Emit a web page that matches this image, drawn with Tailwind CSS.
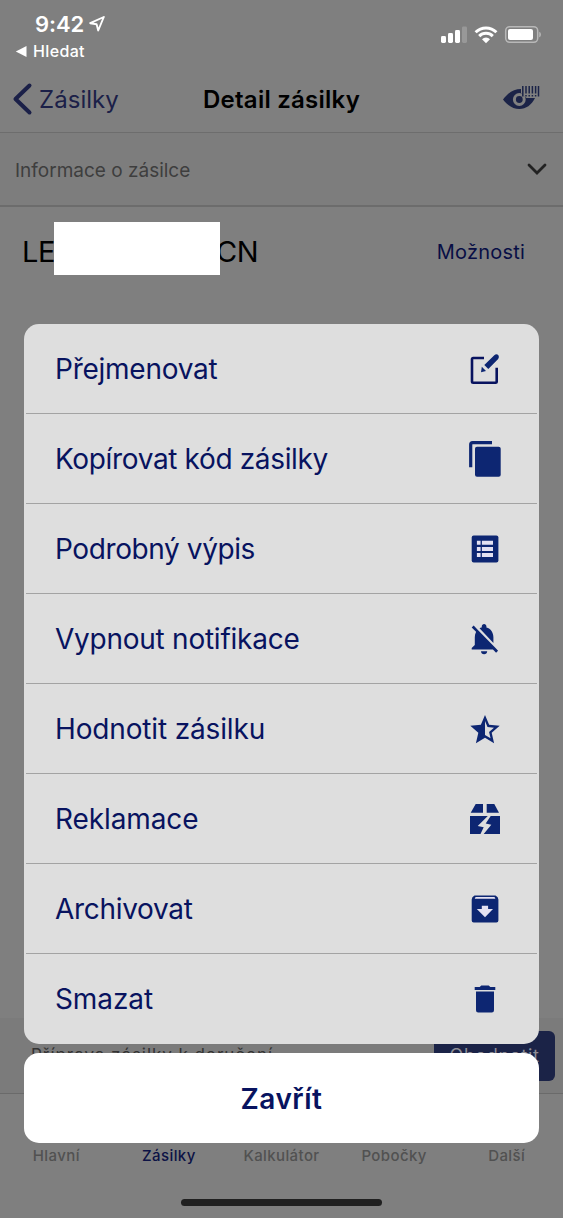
<!DOCTYPE html>
<html lang="cs">

<head>
  <meta charset="UTF-8" />
  <title>Detail zásilky</title>
  <meta name="viewport" content="width=device-width, initial-scale=1.0" />
  <script src="https://cdn.jsdelivr.net/npm/@tailwindcss/browser@4"></script>
</head>

<body class="font-['Inter',sans-serif] bg-[#7f7f7f] overflow-hidden">
  <div class="relative w-[563px] h-[1218px] flex flex-col overflow-hidden">

    <!-- Status bar -->
    <div class="h-[66px] shrink-0 flex justify-between text-white">
      <div class="pt-[10px] pl-[15px]">
        <div class="flex items-center h-[28px] pl-[20px]">
          <span class="text-[22px] leading-[28px] font-semibold tracking-[-0.1px]">9:42</span>
          <svg class="ml-[5px] w-[16px] h-[16px]" viewBox="0 0 16 16" fill="none" stroke="currentColor" stroke-width="1.9" stroke-linejoin="round"><path d="M14.8 1 1.2 7.200 7.600 8.200 9.200 14.500z" /></svg>
        </div>
        <div class="flex items-center h-[26px]">
          <svg class="w-[12px] h-[11px]" viewBox="0 0 12 11" fill="currentColor"><path d="M.8 5.500 11.500 0v11z" /></svg>
          <span class="ml-[6px] text-[16px] leading-[26px] font-medium tracking-[0.35px]">Hledat</span>
        </div>
      </div>
      <div class="flex items-start pt-[25px] pr-[21px]">
        <svg class="w-[26px] h-[19px]" viewBox="0 0 26 19" fill="currentColor">
          <rect x="0" y="11" width="5" height="7" rx="1.4" />
          <rect x="7" y="8" width="5" height="10" rx="1.4" />
          <rect x="14" y="5" width="5" height="13" rx="1.4" />
          <rect x="21" y="1.500" width="5" height="16.500" rx="1.4" opacity=".2" />
        </svg>
        <svg class="ml-[7px] w-[24px] h-[19px]" viewBox="0 0 24 19" fill="none" stroke="currentColor" stroke-width="3">
          <path d="M1.600 7.200a14.800 14.800 0 0 1 20.800 0" />
          <path d="M5.200 11.100a9.700 9.700 0 0 1 13.600 0" />
          <path d="M8 14.200a5.700 5.700 0 0 1 8 0L12 18.200z" fill="currentColor" stroke="none" />
        </svg>
        <svg class="ml-[6px] w-[38px] h-[19px]" viewBox="0 0 38 19">
          <rect x="1.700" y="1.700" width="32" height="15.600" rx="4" fill="none" stroke="#fff" stroke-opacity=".45" stroke-width="1.500" />
          <rect x="4" y="4" width="25" height="11" rx="2" fill="#fff" />
          <path d="M35.300 6.700c2 .8 2 4.800 0 5.600z" fill="#fff" fill-opacity=".5" />
        </svg>
      </div>
    </div>

    <!-- Navigation -->
    <div class="h-[67px] shrink-0 border-b border-[#6d6d6d] grid grid-cols-[1fr_auto_1fr] items-center">
      <div class="flex items-center pl-[12px] text-[#1b2048]">
        <svg class="w-[21px] h-[34px]" viewBox="0 0 21 34" fill="none" stroke="currentColor" stroke-width="4" stroke-linecap="round" stroke-linejoin="round"><path d="M17.500 3.500 3.500 17l14 13.500" /></svg>
        <span class="ml-[6px] pt-[2px] text-[24px] leading-[30px] tracking-[0.05px]">Zásilky</span>
      </div>
      <h1 class="pt-[2px] text-[24px] leading-[30px] font-semibold text-black tracking-[0.25px]">Detail zásilky</h1>
      <div class="flex justify-end pr-[23px]">
        <svg class="w-[38px] h-[28px]" viewBox="0 0 38 28">
          <path d="M1 14.500C7 7 12 4 19 4v4h14v5c-3.500 7-9 11-15.500 11S5.500 20.500 1 14.500z" fill="#1b2347" />
          <path d="M19.500 0H38v13H24.500l-5-4z" fill="#808080" />
          <circle cx="17.300" cy="14.500" r="4.900" fill="#1b2347" stroke="#808080" stroke-width="3" />
          <path d="M20.800 1v10.500M24 1v7.500M27.200 1v7.500M30.400 1v7.500M33.600 1v7.500M36.500 1v10.500M24 10v1.500M27.200 10v1.500M30.400 10v1.500M33.600 10v1.500" stroke="#1b2347" stroke-width="1.500" />
        </svg>
      </div>
    </div>

    <!-- Section header -->
    <div class="h-[74px] shrink-0 border-b-2 border-[#6c6c6c] bg-[#7d7d7d] flex items-center justify-between pl-[15px] pr-[16px]">
      <span class="pt-[3px] text-[19px] leading-[26px] text-[#3e3e3e]">Informace o zásilce</span>
      <svg class="w-[20px] h-[14px]" viewBox="0 0 20 14" fill="none" stroke="#222" stroke-width="2.800" stroke-linecap="round"><path d="m2 3 8 8 8-8" /></svg>
    </div>

    <!-- Shipment number -->
    <div class="h-[811px] shrink-0 flex items-start justify-between pt-[15px] pl-[22px] pr-[38px]">
      <div class="flex items-center h-[53px] text-[29px] text-black">
        <span class="w-[32px] pt-[6px] whitespace-nowrap tracking-[-0.5px]">LE</span>
        <span class="relative w-[166px] h-[53px] bg-white"></span>
        <span class="ml-[-4px] pt-[6px] tracking-[-0.5px]">CN</span>
      </div>
      <span class="h-[60px] leading-[61px] text-[20px] text-[#080e45] tracking-[0.2px]">Možnosti</span>
    </div>

    <!-- Customs row -->
    <div class="h-[76px] shrink-0 bg-[#7b7b7b] border-b border-[#6a6a6a] flex items-start justify-between pt-[13px] pl-[31px] pr-[8px]">
      <span class="mt-[12px] text-[17px] leading-[24px] text-[#333] tracking-[0.95px]">Příprava zásilky k doručení</span>
      <span class="w-[121px] h-[50px] rounded-[6px] bg-[#1b2347] text-center text-[18px] leading-[50px] text-[#8e8e96] tracking-[0.7px]">Ohodnotit</span>
    </div>

    <!-- Tab bar -->
    <div class="grow grid grid-cols-5 pt-[52px] text-center text-[15px] leading-[20px] font-medium text-[#515151] tracking-[0.4px]">
      <span>Hlavní</span>
      <span class="text-[#0c1245]">Zásilky</span>
      <span>Kalkulátor</span>
      <span>Pobočky</span>
      <span>Další</span>
    </div>
    <div class="absolute left-[181px] bottom-[12px] w-[201px] h-[7px] rounded-full bg-[#202020]"></div>

    <!-- Action sheet -->
    <div class="absolute left-[24px] top-[324px] w-[515px] flex flex-col gap-[9px]">
      <ul class="rounded-[15px] bg-[#dedede] overflow-hidden text-[28px] text-[#08135f] fill-[#0d2672]">
        <li class="h-[90px] flex items-center justify-between mx-[2px] pt-px pl-[29px] pr-[34px] border-b border-[#a3a3a3]">
          <span class="tracking-[-0.25px]">Přejmenovat</span>
          <svg class="w-[36px] h-[36px]" viewBox="0 0 36 36">
            <path d="M17 7H6.200Q5 7 5 8.200v22.300q0 1.200 1.200 1.200h22.300q1.200 0 1.200-1.200V16.700" fill="none" stroke="#08135f" stroke-width="2.600" />
            <path d="m14 21.200.8-5.400 4.200 4.200zM17.300 14 27.300 4.200q2-1.600 4-.2 1.300 2-.1 4L21.300 18z" />
          </svg>
        </li>
        <li class="h-[90px] flex items-center justify-between mx-[2px] pt-px pl-[29px] pr-[34px] border-b border-[#a3a3a3]">
          <span class="tracking-[-0.35px]">Kopírovat kód zásilky</span>
          <svg class="w-[36px] h-[36px]" viewBox="0 0 36 36">
            <path d="M3.700 26.300V3.600q0-2 2-2H25" fill="none" stroke="#0d2672" stroke-width="3.200" />
            <rect x="8" y="5.700" width="25.700" height="30" rx="2" />
          </svg>
        </li>
        <li class="h-[90px] flex items-center justify-between mx-[2px] pt-px pl-[29px] pr-[34px] border-b border-[#a3a3a3]">
          <span class="tracking-[-0.4px]">Podrobný výpis</span>
          <svg class="w-[36px] h-[36px]" viewBox="0 0 36 36">
            <rect x="4.700" y="4.500" width="26.700" height="27" rx="2" />
            <path d="M9.900 9.800h3.700v4H9.900zM14.900 9.800H26v4H14.900zM9.900 16h3.700v4H9.900zM14.900 16H26v4H14.900zM9.900 22.100h3.700v4H9.900zM14.900 22.100H26v4H14.900z" fill="#e4e1f2" />
          </svg>
        </li>
        <li class="h-[90px] flex items-center justify-between mx-[2px] pt-px pl-[29px] pr-[34px] border-b border-[#a3a3a3]">
          <span class="tracking-[-0.25px]">Vypnout notifikace</span>
          <svg class="w-[36px] h-[36px]" viewBox="0 0 36 36">
            <path transform="translate(-1.500 -.85) scale(1.550)" d="M20 18.690L7.840 6.140 5.270 3.490 4 4.760l2.800 2.800v.01c-.52.99-.8 2.160-.8 3.420v5l-2 2v1h13.730l2 2L21 19.720l-1-1.030zM12 22c1.110 0 2-.89 2-2h-4c0 1.110.89 2 2 2zm6-7.320V11c0-3.080-1.640-5.640-4.500-6.320V4c0-.83-.67-1.500-1.500-1.500s-1.500.67-1.500 1.500v.68c-.15.03-.29.08-.42.12-.1.03-.2.070-.3.110h-.01c-.01 0-.01 0-.02.01-.23.09-.46.2-.68.310 0 0-.01 0-.01.01L18 14.680z" />
          </svg>
        </li>
        <li class="h-[90px] flex items-center justify-between mx-[2px] pt-px pl-[29px] pr-[34px] border-b border-[#a3a3a3]">
          <span class="tracking-[-0.15px]">Hodnotit zásilku</span>
          <svg class="w-[36px] h-[36px]" viewBox="0 0 36 36">
            <path transform="translate(.36 1) scale(1.470 1.490)" d="M22 9.240l-7.190-.62L12 2 9.190 8.630 2 9.240l5.460 4.730L5.820 21 12 17.270 18.180 21l-1.630-7.030L22 9.240zM12 15.400V6.100l1.710 4.040 4.380.38-3.320 2.880 1 4.280L12 15.400z" />
          </svg>
        </li>
        <li class="h-[90px] flex items-center justify-between mx-[2px] pt-px pl-[29px] pr-[34px] border-b border-[#a3a3a3]">
          <span class="tracking-[-0.1px]">Reklamace</span>
          <svg class="w-[36px] h-[36px]" viewBox="0 0 36 36">
            <path d="M8.700 3H16v8.700H3.700zM19.700 3h7.600L32 11.700H19.700zM3 15h30v18H3z" />
            <path d="M20.800 15h2.900l-5 7.500 5.600 1.300-7.600 9.200h-3.200l3.200-6.800-6-1.200z" fill="#dedede" />
          </svg>
        </li>
        <li class="h-[90px] flex items-center justify-between mx-[2px] pt-px pl-[29px] pr-[34px] border-b border-[#a3a3a3]">
          <span class="tracking-[-0.3px]">Archivovat</span>
          <svg class="w-[36px] h-[36px]" viewBox="0 0 36 36">
            <path d="M7.500 4.400h21q2.900 1.500 2.900 4v21.200q0 2-2 2H6.700q-2 0-2-2V8.400q0-2.500 2.800-4z" />
            <path d="M8.600 6h18.900l.9 1.800H7.700zM14.800 14.700h6.300V18H26l-8 8.300L9.800 18h5z" fill="#e4e1f2" />
          </svg>
        </li>
        <li class="h-[90px] flex items-center justify-between mx-[2px] pl-[29px] pr-[34px]">
          <span class="tracking-[-0.1px]">Smazat</span>
          <svg class="w-[36px] h-[36px]" viewBox="0 0 36 36">
            <path d="M7.700 6h5l1.600-1.600h7.400L23.300 6h5v3H7.700zM9 10.500h18v18.700q0 2.200-2.200 2.200H11.200Q9 31.400 9 29.200z" />
          </svg>
        </li>
      </ul>
      <button class="h-[90px] pt-[2px] rounded-[15px] bg-white text-[28px] font-semibold tracking-[0.5px] text-[#08135f]">Zavřít</button>
    </div>
  </div>
</body>

</html>
